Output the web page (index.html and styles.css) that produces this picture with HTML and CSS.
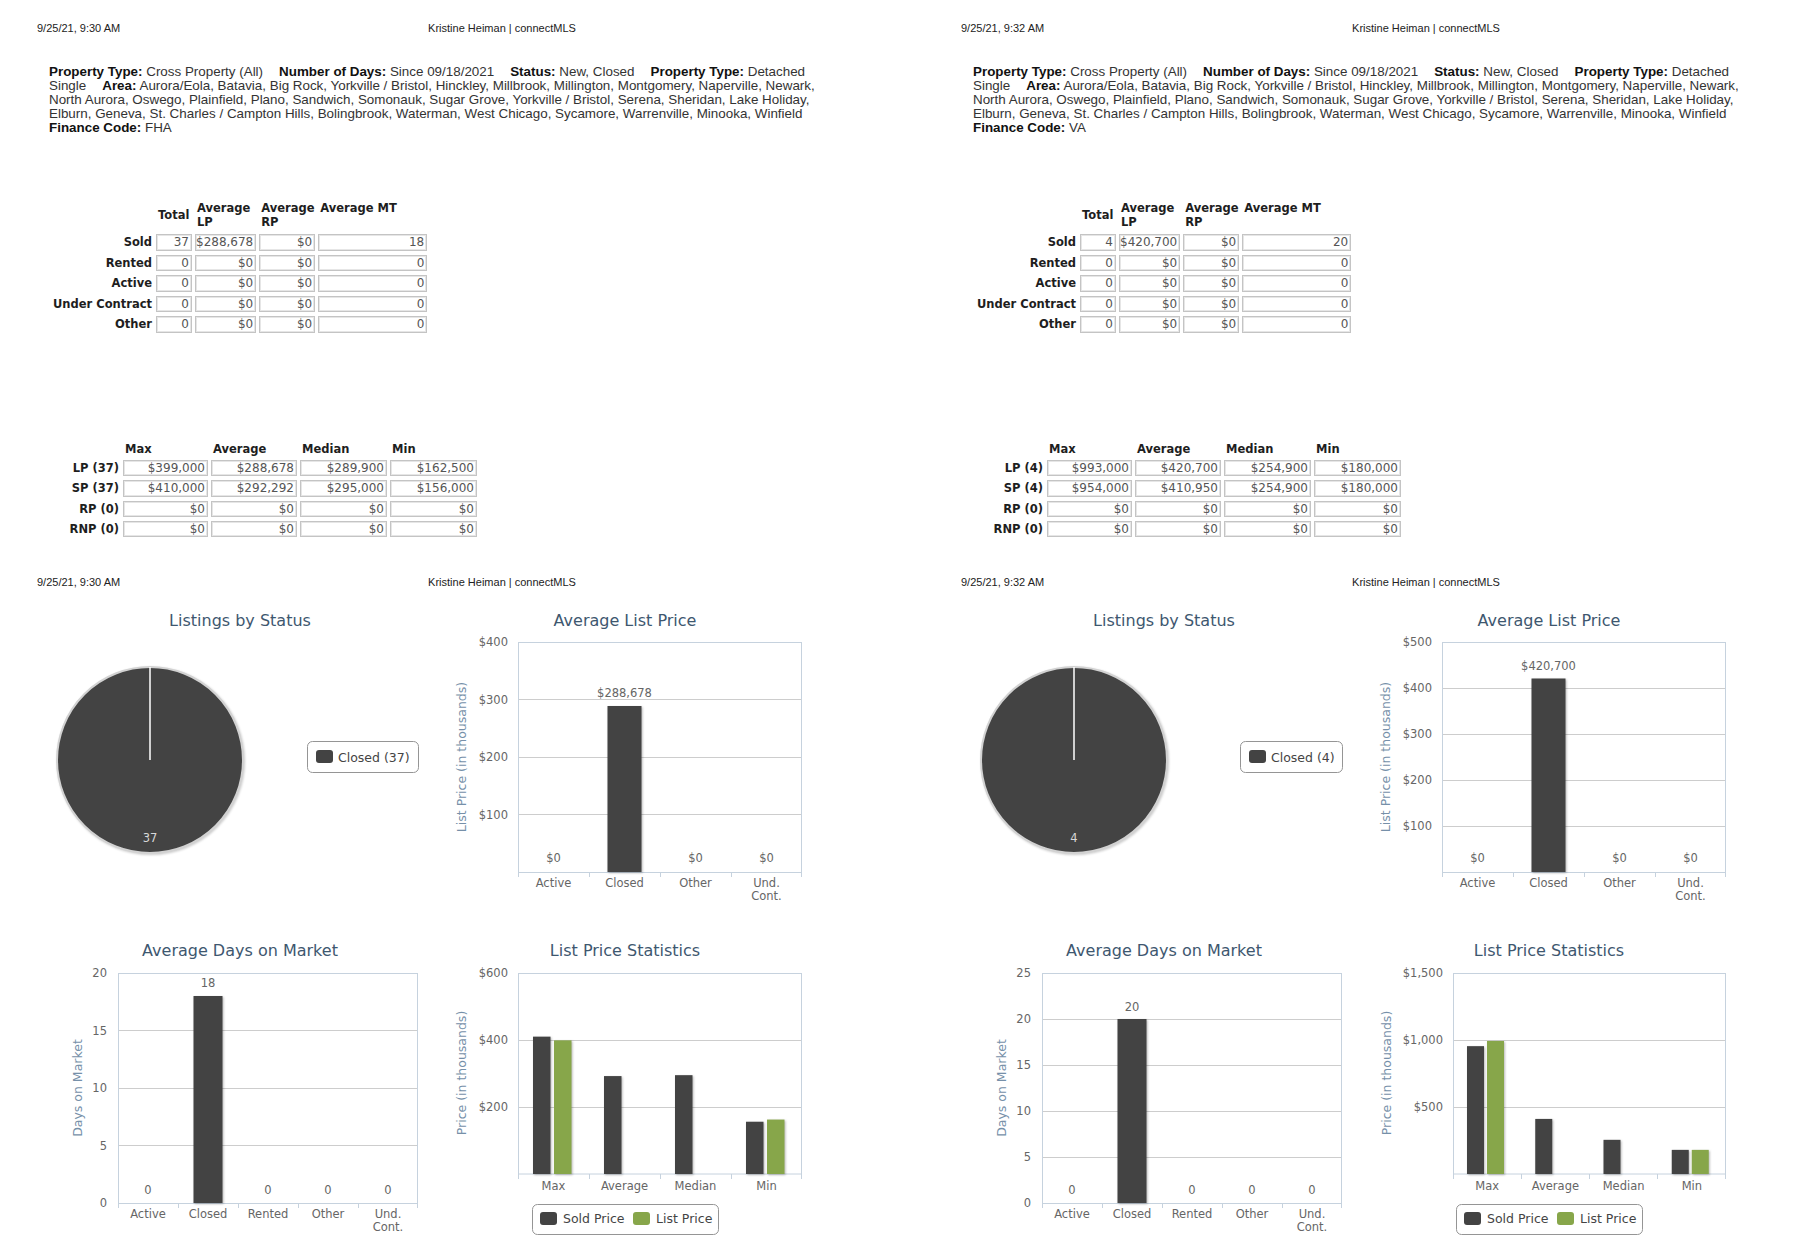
FILE: index.html
```html
<!DOCTYPE html>
<html lang="en">
<head>
<meta charset="utf-8">
<title>connectMLS Market Statistics</title>
<link rel="stylesheet" href="styles.css">
</head>
<body>
<div class="sheet">

  <!-- ===================== LEFT PAGE (FHA) ===================== -->
  <section class="page">
    <header class="print-head"><span class="ph-date">9/25/21, 9:30 AM</span><span class="ph-name">Kristine Heiman | connectMLS</span><span></span></header>

    <div class="criteria">
      <span class="line"><b>Property Type:</b> Cross Property (All)<span class="gap"></span><b>Number of Days:</b> Since 09/18/2021<span class="gap"></span><b>Status:</b> New, Closed<span class="gap"></span><b>Property Type:</b> Detached</span>
      <span class="line">Single<span class="gap"></span><b>Area:</b> Aurora/Eola, Batavia, Big Rock, Yorkville / Bristol, Hinckley, Millbrook, Millington, Montgomery, Naperville, Newark,</span>
      <span class="line">North Aurora, Oswego, Plainfield, Plano, Sandwich, Somonauk, Sugar Grove, Yorkville / Bristol, Serena, Sheridan, Lake Holiday,</span>
      <span class="line">Elburn, Geneva, St. Charles / Campton Hills, Bolingbrook, Waterman, West Chicago, Sycamore, Warrenville, Minooka, Winfield</span>
      <span class="line"><b>Finance Code:</b> FHA</span>
    </div>

    <table class="summary">
      <tr><th class="rh"></th><th class="ch total w36">Total</th><th class="ch w61">Average LP</th><th class="ch w56">Average RP</th><th class="ch w109">Average MT</th></tr>
      <tr><th class="rh">Sold</th><td>37</td><td>$288,678</td><td>$0</td><td>18</td></tr>
      <tr><th class="rh">Rented</th><td>0</td><td>$0</td><td>$0</td><td>0</td></tr>
      <tr><th class="rh">Active</th><td>0</td><td>$0</td><td>$0</td><td>0</td></tr>
      <tr><th class="rh">Under Contract</th><td>0</td><td>$0</td><td>$0</td><td>0</td></tr>
      <tr><th class="rh">Other</th><td>0</td><td>$0</td><td>$0</td><td>0</td></tr>
    </table>

    <table class="range">
      <tr><th class="rh"></th><th class="ch w85">Max</th><th class="ch w86">Average</th><th class="ch w87">Median</th><th class="ch w87">Min</th></tr>
      <tr><th class="rh">LP (37)</th><td>$399,000</td><td>$288,678</td><td>$289,900</td><td>$162,500</td></tr>
      <tr><th class="rh">SP (37)</th><td>$410,000</td><td>$292,292</td><td>$295,000</td><td>$156,000</td></tr>
      <tr><th class="rh">RP (0)</th><td>$0</td><td>$0</td><td>$0</td><td>$0</td></tr>
      <tr><th class="rh">RNP (0)</th><td>$0</td><td>$0</td><td>$0</td><td>$0</td></tr>
    </table>

    <header class="print-head second"><span class="ph-date">9/25/21, 9:30 AM</span><span class="ph-name">Kristine Heiman | connectMLS</span><span></span></header>

    <div class="charts">
      <!-- Listings by Status -->
      <svg class="chart" width="400" height="330" viewBox="0 0 400 330">
        <text class="c-title" x="200" y="26">Listings by Status</text>
        <circle class="pie" cx="110" cy="160" r="93"/>
        <line class="pie-cut" x1="110" y1="67" x2="110" y2="160"/>
        <text class="c-pielab" x="110" y="242">37</text>
        <rect class="legend-box" x="267.5" y="141.5" width="111" height="31" rx="5"/>
        <rect class="sw-dark" x="276" y="150" width="17" height="13" rx="3"/>
        <text class="c-legend" x="298" y="161.5">Closed (37)</text>
      </svg>

      <!-- Average List Price -->
      <svg class="chart" width="370" height="330" viewBox="0 0 370 330">
        <text class="c-title" x="185" y="26">Average List Price</text>
        <g class="grid">
          <line x1="78" x2="362" y1="99.5" y2="99.5"/>
          <line x1="78" x2="362" y1="157.5" y2="157.5"/>
          <line x1="78" x2="362" y1="214.5" y2="214.5"/>
        </g>
        <rect class="plot" x="78.5" y="42.5" width="283" height="230"/>
        <g class="ticks">
          <line x1="78.5" x2="78.5" y1="272" y2="277"/>
          <line x1="149.5" x2="149.5" y1="272" y2="277"/>
          <line x1="220.5" x2="220.5" y1="272" y2="277"/>
          <line x1="291.5" x2="291.5" y1="272" y2="277"/>
          <line x1="361.5" x2="361.5" y1="272" y2="277"/>
        </g>
        <g class="ylab">
          <text x="68" y="46">$400</text>
          <text x="68" y="103.5">$300</text>
          <text x="68" y="161">$200</text>
          <text x="68" y="218.5">$100</text>
        </g>
        <text class="ytitle" transform="translate(26 157) rotate(-90)">List Price (in thousands)</text>
        <rect class="bar" x="167.5" y="106" width="34" height="166"/>
        <g class="dlab">
          <text x="184.5" y="97">$288,678</text>
          <text x="113.5" y="262">$0</text>
          <text x="255.5" y="262">$0</text>
          <text x="326.5" y="262">$0</text>
        </g>
        <g class="xlab">
          <text x="113.5" y="287">Active</text>
          <text x="184.5" y="287">Closed</text>
          <text x="255.5" y="287">Other</text>
          <text x="326.5" y="287">Und.</text>
          <text x="326.5" y="300">Cont.</text>
        </g>
      </svg>

      <!-- Average Days on Market -->
      <svg class="chart" width="400" height="330" viewBox="0 0 400 330">
        <text class="c-title" x="200" y="26">Average Days on Market</text>
        <g class="grid">
          <line x1="78" x2="378" y1="100.5" y2="100.5"/>
          <line x1="78" x2="378" y1="158.5" y2="158.5"/>
          <line x1="78" x2="378" y1="215.5" y2="215.5"/>
        </g>
        <rect class="plot" x="78.5" y="43.5" width="299" height="230"/>
        <g class="ticks">
          <line x1="78.5" x2="78.5" y1="273" y2="278"/>
          <line x1="138.5" x2="138.5" y1="273" y2="278"/>
          <line x1="198.5" x2="198.5" y1="273" y2="278"/>
          <line x1="258.5" x2="258.5" y1="273" y2="278"/>
          <line x1="318.5" x2="318.5" y1="273" y2="278"/>
          <line x1="377.5" x2="377.5" y1="273" y2="278"/>
        </g>
        <g class="ylab">
          <text x="67" y="47">20</text>
          <text x="67" y="104.5">15</text>
          <text x="67" y="162">10</text>
          <text x="67" y="219.5">5</text>
          <text x="67" y="277">0</text>
        </g>
        <text class="ytitle" transform="translate(42 158) rotate(-90)">Days on Market</text>
        <rect class="bar" x="153.5" y="66" width="29" height="207"/>
        <g class="dlab">
          <text x="168" y="57">18</text>
          <text x="108" y="264">0</text>
          <text x="228" y="264">0</text>
          <text x="288" y="264">0</text>
          <text x="348" y="264">0</text>
        </g>
        <g class="xlab">
          <text x="108" y="288">Active</text>
          <text x="168" y="288">Closed</text>
          <text x="228" y="288">Rented</text>
          <text x="288" y="288">Other</text>
          <text x="348" y="288">Und.</text>
          <text x="348" y="301">Cont.</text>
        </g>
      </svg>

      <!-- List Price Statistics -->
      <svg class="chart" width="370" height="330" viewBox="0 0 370 330">
        <text class="c-title" x="185" y="26">List Price Statistics</text>
        <g class="grid">
          <line x1="78" x2="362" y1="110.5" y2="110.5"/>
          <line x1="78" x2="362" y1="177.5" y2="177.5"/>
        </g>
        <rect class="plot" x="78.5" y="43.5" width="283" height="200.5"/>
        <g class="ticks">
          <line x1="78.5" x2="78.5" y1="244" y2="249"/>
          <line x1="149.5" x2="149.5" y1="244" y2="249"/>
          <line x1="220.5" x2="220.5" y1="244" y2="249"/>
          <line x1="291.5" x2="291.5" y1="244" y2="249"/>
          <line x1="361.5" x2="361.5" y1="244" y2="249"/>
        </g>
        <g class="ylab">
          <text x="68" y="47">$600</text>
          <text x="68" y="114">$400</text>
          <text x="68" y="181">$200</text>
        </g>
        <text class="ytitle" transform="translate(26 143) rotate(-90)">Price (in thousands)</text>
        <rect class="bar" x="93" y="106.65" width="17.5" height="137.35"/>
        <rect class="bar green" x="114" y="110.33" width="17.5" height="133.67"/>
        <rect class="bar" x="164" y="146.08" width="17.5" height="97.92"/>
        <rect class="bar" x="235" y="145.17" width="17.5" height="98.83"/>
        <rect class="bar" x="306" y="191.74" width="17.5" height="52.26"/>
        <rect class="bar green" x="327" y="189.56" width="17.5" height="54.44"/>
        <g class="xlab">
          <text x="113.5" y="260">Max</text>
          <text x="184.5" y="260">Average</text>
          <text x="255.5" y="260">Median</text>
          <text x="326.5" y="260">Min</text>
        </g>
        <rect class="legend-box" x="92.5" y="274.5" width="186" height="30" rx="5"/>
        <rect class="sw-dark" x="100" y="282" width="17" height="13" rx="3"/>
        <text class="c-legend" x="123" y="293">Sold Price</text>
        <rect class="sw-green" x="193" y="282" width="17" height="13" rx="3"/>
        <text class="c-legend" x="216" y="293">List Price</text>
      </svg>
    </div>
  </section>

  <!-- ===================== RIGHT PAGE (VA) ===================== -->
  <section class="page">
    <header class="print-head"><span class="ph-date">9/25/21, 9:32 AM</span><span class="ph-name">Kristine Heiman | connectMLS</span><span></span></header>

    <div class="criteria">
      <span class="line"><b>Property Type:</b> Cross Property (All)<span class="gap"></span><b>Number of Days:</b> Since 09/18/2021<span class="gap"></span><b>Status:</b> New, Closed<span class="gap"></span><b>Property Type:</b> Detached</span>
      <span class="line">Single<span class="gap"></span><b>Area:</b> Aurora/Eola, Batavia, Big Rock, Yorkville / Bristol, Hinckley, Millbrook, Millington, Montgomery, Naperville, Newark,</span>
      <span class="line">North Aurora, Oswego, Plainfield, Plano, Sandwich, Somonauk, Sugar Grove, Yorkville / Bristol, Serena, Sheridan, Lake Holiday,</span>
      <span class="line">Elburn, Geneva, St. Charles / Campton Hills, Bolingbrook, Waterman, West Chicago, Sycamore, Warrenville, Minooka, Winfield</span>
      <span class="line"><b>Finance Code:</b> VA</span>
    </div>

    <table class="summary">
      <tr><th class="rh"></th><th class="ch total w36">Total</th><th class="ch w61">Average LP</th><th class="ch w56">Average RP</th><th class="ch w109">Average MT</th></tr>
      <tr><th class="rh">Sold</th><td>4</td><td>$420,700</td><td>$0</td><td>20</td></tr>
      <tr><th class="rh">Rented</th><td>0</td><td>$0</td><td>$0</td><td>0</td></tr>
      <tr><th class="rh">Active</th><td>0</td><td>$0</td><td>$0</td><td>0</td></tr>
      <tr><th class="rh">Under Contract</th><td>0</td><td>$0</td><td>$0</td><td>0</td></tr>
      <tr><th class="rh">Other</th><td>0</td><td>$0</td><td>$0</td><td>0</td></tr>
    </table>

    <table class="range">
      <tr><th class="rh"></th><th class="ch w85">Max</th><th class="ch w86">Average</th><th class="ch w87">Median</th><th class="ch w87">Min</th></tr>
      <tr><th class="rh">LP (4)</th><td>$993,000</td><td>$420,700</td><td>$254,900</td><td>$180,000</td></tr>
      <tr><th class="rh">SP (4)</th><td>$954,000</td><td>$410,950</td><td>$254,900</td><td>$180,000</td></tr>
      <tr><th class="rh">RP (0)</th><td>$0</td><td>$0</td><td>$0</td><td>$0</td></tr>
      <tr><th class="rh">RNP (0)</th><td>$0</td><td>$0</td><td>$0</td><td>$0</td></tr>
    </table>

    <header class="print-head second"><span class="ph-date">9/25/21, 9:32 AM</span><span class="ph-name">Kristine Heiman | connectMLS</span><span></span></header>

    <div class="charts">
      <!-- Listings by Status -->
      <svg class="chart" width="400" height="330" viewBox="0 0 400 330">
        <text class="c-title" x="200" y="26">Listings by Status</text>
        <circle class="pie" cx="110" cy="160" r="93"/>
        <line class="pie-cut" x1="110" y1="67" x2="110" y2="160"/>
        <text class="c-pielab" x="110" y="242">4</text>
        <rect class="legend-box" x="276.5" y="141.5" width="102" height="31" rx="5"/>
        <rect class="sw-dark" x="285" y="150" width="17" height="13" rx="3"/>
        <text class="c-legend" x="307" y="161.5">Closed (4)</text>
      </svg>

      <!-- Average List Price -->
      <svg class="chart" width="370" height="330" viewBox="0 0 370 330">
        <text class="c-title" x="185" y="26">Average List Price</text>
        <g class="grid">
          <line x1="78" x2="362" y1="88.5" y2="88.5"/>
          <line x1="78" x2="362" y1="134.5" y2="134.5"/>
          <line x1="78" x2="362" y1="180.5" y2="180.5"/>
          <line x1="78" x2="362" y1="226.5" y2="226.5"/>
        </g>
        <rect class="plot" x="78.5" y="42.5" width="283" height="230"/>
        <g class="ticks">
          <line x1="78.5" x2="78.5" y1="272" y2="277"/>
          <line x1="149.5" x2="149.5" y1="272" y2="277"/>
          <line x1="220.5" x2="220.5" y1="272" y2="277"/>
          <line x1="291.5" x2="291.5" y1="272" y2="277"/>
          <line x1="361.5" x2="361.5" y1="272" y2="277"/>
        </g>
        <g class="ylab">
          <text x="68" y="46">$500</text>
          <text x="68" y="92">$400</text>
          <text x="68" y="138">$300</text>
          <text x="68" y="184">$200</text>
          <text x="68" y="230">$100</text>
        </g>
        <text class="ytitle" transform="translate(26 157) rotate(-90)">List Price (in thousands)</text>
        <rect class="bar" x="167.5" y="78.5" width="34" height="193.5"/>
        <g class="dlab">
          <text x="184.5" y="70">$420,700</text>
          <text x="113.5" y="262">$0</text>
          <text x="255.5" y="262">$0</text>
          <text x="326.5" y="262">$0</text>
        </g>
        <g class="xlab">
          <text x="113.5" y="287">Active</text>
          <text x="184.5" y="287">Closed</text>
          <text x="255.5" y="287">Other</text>
          <text x="326.5" y="287">Und.</text>
          <text x="326.5" y="300">Cont.</text>
        </g>
      </svg>

      <!-- Average Days on Market -->
      <svg class="chart" width="400" height="330" viewBox="0 0 400 330">
        <text class="c-title" x="200" y="26">Average Days on Market</text>
        <g class="grid">
          <line x1="78" x2="378" y1="89.5" y2="89.5"/>
          <line x1="78" x2="378" y1="135.5" y2="135.5"/>
          <line x1="78" x2="378" y1="181.5" y2="181.5"/>
          <line x1="78" x2="378" y1="227.5" y2="227.5"/>
        </g>
        <rect class="plot" x="78.5" y="43.5" width="299" height="230"/>
        <g class="ticks">
          <line x1="78.5" x2="78.5" y1="273" y2="278"/>
          <line x1="138.5" x2="138.5" y1="273" y2="278"/>
          <line x1="198.5" x2="198.5" y1="273" y2="278"/>
          <line x1="258.5" x2="258.5" y1="273" y2="278"/>
          <line x1="318.5" x2="318.5" y1="273" y2="278"/>
          <line x1="377.5" x2="377.5" y1="273" y2="278"/>
        </g>
        <g class="ylab">
          <text x="67" y="47">25</text>
          <text x="67" y="93">20</text>
          <text x="67" y="139">15</text>
          <text x="67" y="185">10</text>
          <text x="67" y="231">5</text>
          <text x="67" y="277">0</text>
        </g>
        <text class="ytitle" transform="translate(42 158) rotate(-90)">Days on Market</text>
        <rect class="bar" x="153.5" y="89" width="29" height="184"/>
        <g class="dlab">
          <text x="168" y="81">20</text>
          <text x="108" y="264">0</text>
          <text x="228" y="264">0</text>
          <text x="288" y="264">0</text>
          <text x="348" y="264">0</text>
        </g>
        <g class="xlab">
          <text x="108" y="288">Active</text>
          <text x="168" y="288">Closed</text>
          <text x="228" y="288">Rented</text>
          <text x="288" y="288">Other</text>
          <text x="348" y="288">Und.</text>
          <text x="348" y="301">Cont.</text>
        </g>
      </svg>

      <!-- List Price Statistics -->
      <svg class="chart" width="370" height="330" viewBox="0 0 370 330">
        <text class="c-title" x="185" y="26">List Price Statistics</text>
        <g class="grid">
          <line x1="89" x2="362" y1="110.5" y2="110.5"/>
          <line x1="89" x2="362" y1="177.5" y2="177.5"/>
        </g>
        <rect class="plot" x="89.5" y="43.5" width="272" height="200.5"/>
        <g class="ticks">
          <line x1="89.5" x2="89.5" y1="244" y2="249"/>
          <line x1="157.5" x2="157.5" y1="244" y2="249"/>
          <line x1="225.5" x2="225.5" y1="244" y2="249"/>
          <line x1="293.5" x2="293.5" y1="244" y2="249"/>
          <line x1="361.5" x2="361.5" y1="244" y2="249"/>
        </g>
        <g class="ylab">
          <text x="79" y="47">$1,500</text>
          <text x="79" y="114">$1,000</text>
          <text x="79" y="181">$500</text>
        </g>
        <text class="ytitle" transform="translate(27 143) rotate(-90)">Price (in thousands)</text>
        <rect class="bar" x="103" y="116.16" width="17" height="127.84"/>
        <rect class="bar green" x="123" y="110.94" width="17" height="133.06"/>
        <rect class="bar" x="171.25" y="188.93" width="17" height="55.07"/>
        <rect class="bar" x="239.5" y="209.84" width="17" height="34.16"/>
        <rect class="bar" x="307.75" y="219.88" width="17" height="24.12"/>
        <rect class="bar green" x="327.75" y="219.88" width="17" height="24.12"/>
        <g class="xlab">
          <text x="123.1" y="260">Max</text>
          <text x="191.4" y="260">Average</text>
          <text x="259.6" y="260">Median</text>
          <text x="327.9" y="260">Min</text>
        </g>
        <rect class="legend-box" x="92.5" y="274.5" width="186" height="30" rx="5"/>
        <rect class="sw-dark" x="100" y="282" width="17" height="13" rx="3"/>
        <text class="c-legend" x="123" y="293">Sold Price</text>
        <rect class="sw-green" x="193" y="282" width="17" height="13" rx="3"/>
        <text class="c-legend" x="216" y="293">List Price</text>
      </svg>
    </div>
  </section>

</div>
</body>
</html>
```

FILE: styles.css
```css
html, body {
  margin: 0;
  padding: 0;
  background: #ffffff;
  width: 1800px;
  height: 1260px;
  overflow: hidden;
}

body {
  font-family: "Liberation Sans", Arial, sans-serif;
  color: #222;
}

.sheet {
  display: flex;
  width: 1800px;
  height: 1260px;
  overflow: hidden;
}

.page {
  flex: none;
  width: 924px;
  padding-top: 21px;
  box-sizing: border-box;
}

/* ---------- print header ---------- */
.print-head {
  display: grid;
  grid-template-columns: 1fr auto 1fr;
  width: 930px;
  margin-left: 37px;
  height: 14px;
  line-height: 14px;
  font-size: 11px;
  color: #222;
}

.print-head.second {
  margin-top: 33.8px;
}

.ph-date {
  justify-self: start;
}

/* ---------- search criteria ---------- */
.criteria {
  margin: 29.7px 0 0 49px;
  font-size: 13.4px;
  line-height: 14px;
  color: #333;
}

.criteria .line {
  display: block;
  white-space: nowrap;
}

.criteria b {
  color: #111;
}

.criteria .gap {
  display: inline-block;
  width: 16px;
}

/* ---------- tables ---------- */
table {
  border-collapse: separate;
  font-family: "DejaVu Sans", Verdana, sans-serif;
}

.summary {
  margin: 63.5px 0 0 49px;
  border-spacing: 3px 4px;
}

.range {
  margin: 101.3px 0 0 47px;
  border-spacing: 3px 4px;
}

th, td {
  box-sizing: border-box;
  padding: 0;
}

th.rh {
  font-size: 11.5px;
  font-weight: bold;
  color: #1e1e1e;
  text-align: right;
  padding-right: 1px;
  white-space: nowrap;
}

.summary th.rh { width: 101px; }
.range th.rh { width: 70px; }

th.ch {
  font-size: 11.5px;
  font-weight: bold;
  color: #1e1e1e;
  text-align: left;
  padding-left: 2px;
  vertical-align: top;
}

.summary th.ch {
  height: 28px;
  line-height: 13.5px;
}

.summary th.ch.total {
  vertical-align: middle;
}

.range th.ch {
  height: 14px;
  line-height: 14px;
}

.w36 { width: 36px; }
.w56 { width: 56px; }
.w61 { width: 61px; }
.w85 { width: 85px; }
.w86 { width: 86px; }
.w87 { width: 87px; }
.w109 { width: 109px; }

td {
  line-height: 14px;
  font-size: 12px;
  color: #555;
  text-align: right;
  padding-right: 2px;
  border: 1px solid #c4c4c4;
  box-shadow: inset 0 0 0 1px #e6e6e6;
  white-space: nowrap;
}

.summary td { height: 16.5px; }
.range td { height: 16.3px; }

/* ---------- charts ---------- */
.charts {
  display: grid;
  grid-template-columns: 400px 370px;
  grid-template-rows: 330px 330px;
  margin: 11px 0 0 40px;
}

.chart {
  display: block;
}

.chart text {
  font-family: "DejaVu Sans", Verdana, sans-serif;
}

.c-title {
  font-size: 16px;
  fill: #3e576f;
  text-anchor: middle;
}

.grid line {
  stroke: #cdcdcd;
  stroke-width: 1;
}

.plot {
  fill: none;
  stroke: #c6d2de;
  stroke-width: 1;
}

.ticks line {
  stroke: #c6d2de;
  stroke-width: 1;
}

.ylab text {
  font-size: 11.5px;
  fill: #666;
  text-anchor: end;
}

.xlab text,
.dlab text {
  font-size: 11.5px;
  fill: #666;
  text-anchor: middle;
}

.ytitle {
  font-size: 12.5px;
  fill: #7690a9;
  text-anchor: middle;
}

.bar {
  fill: #434343;
  filter: drop-shadow(1px 1px 1px rgba(0, 0, 0, 0.28));
}

.bar.green {
  fill: #87a64a;
}

.pie {
  fill: #434343;
  stroke: #d2d2d2;
  stroke-width: 2;
  filter: drop-shadow(1px 1px 1px rgba(0, 0, 0, 0.2));
}

.pie-cut {
  stroke: #ffffff;
  stroke-width: 1.5;
}

.c-pielab {
  font-size: 11.5px;
  fill: #d8d8d8;
  text-anchor: middle;
}

.legend-box {
  fill: #ffffff;
  stroke: #959595;
  stroke-width: 1;
}

.sw-dark { fill: #434343; }
.sw-green { fill: #87a64a; }

.c-legend {
  font-size: 12.5px;
  fill: #444;
}
```
